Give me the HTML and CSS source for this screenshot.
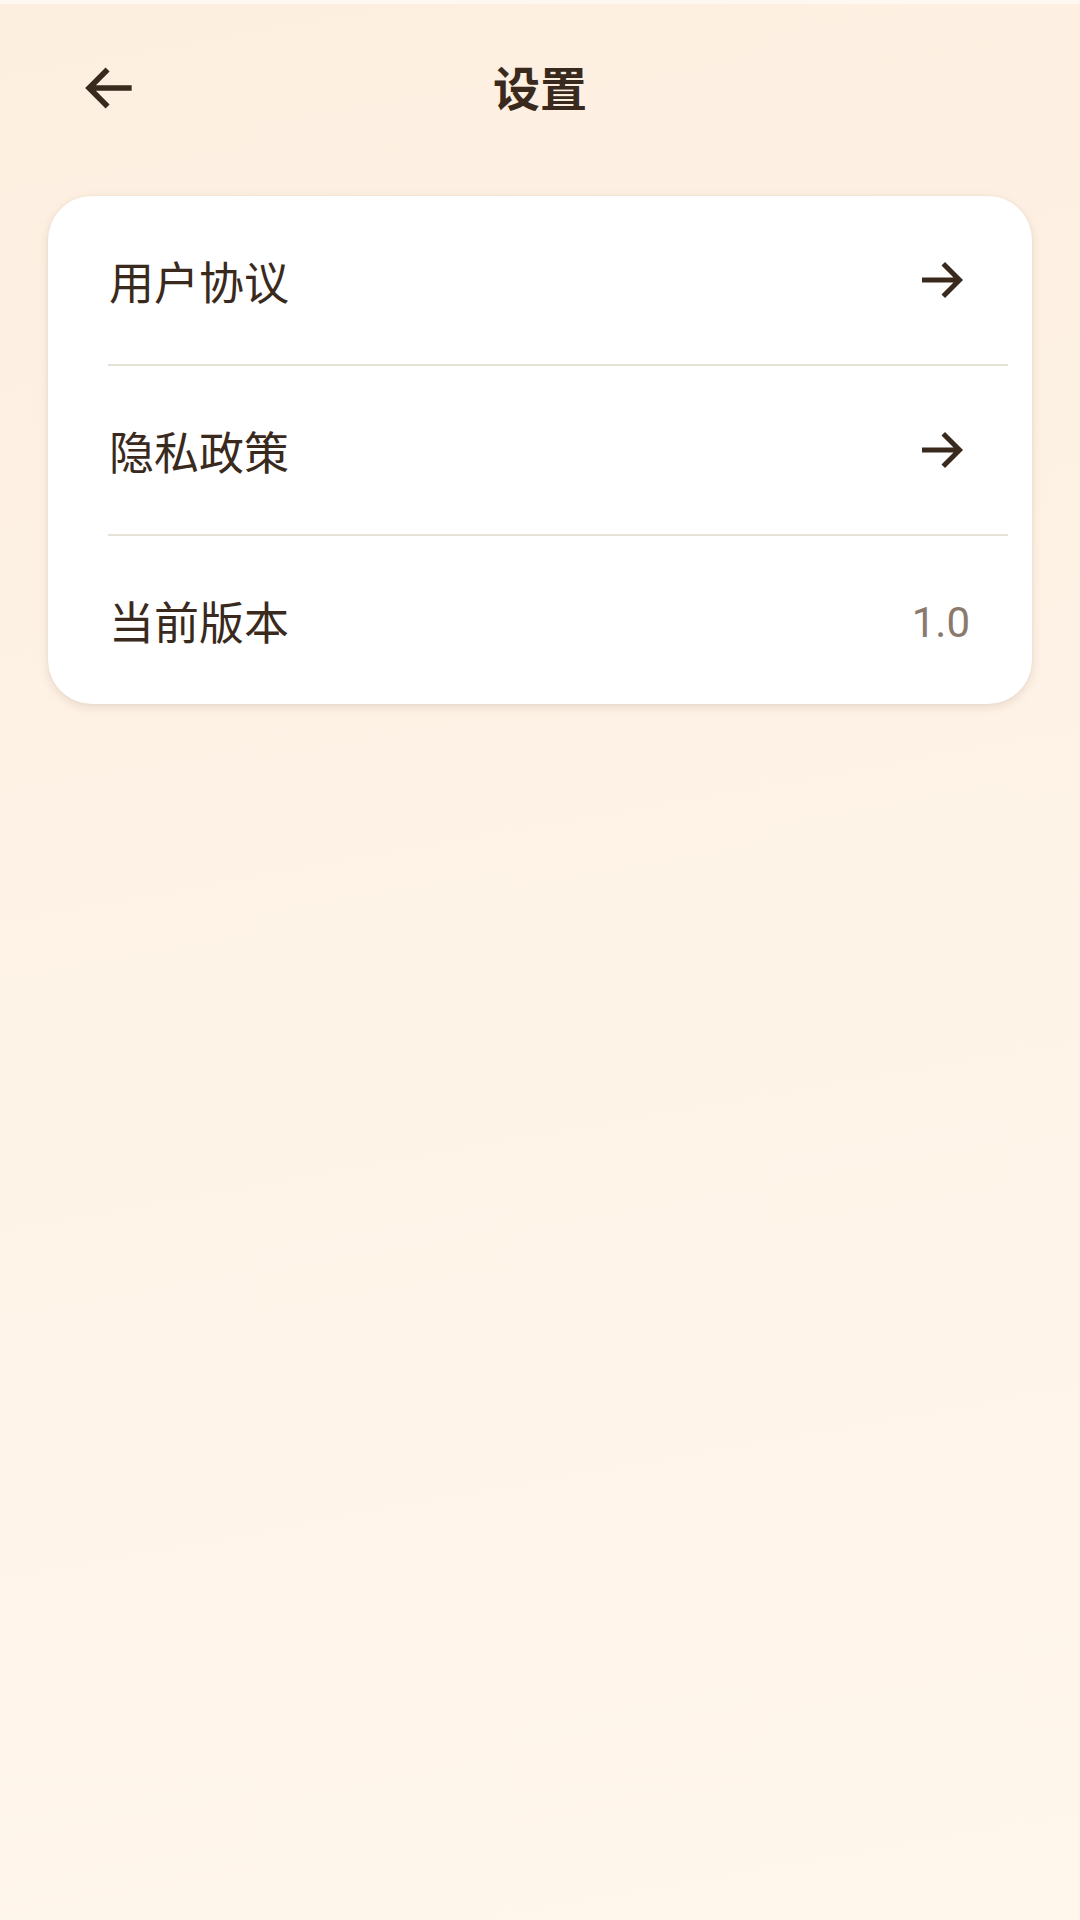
FILE: index.html
```html
<!DOCTYPE html>
<html lang="zh">
<head>
<meta charset="utf-8">
<title>设置</title>
<link rel="stylesheet" href="styles.css">
</head>
<body>
<div class="page">
  <div class="statusbar"></div>
  <header class="header">
    <div class="back">
      <svg class="back-icon" viewBox="0 0 24 24"><path d="M20 12H5M11.5 5.5L5 12l6.5 6.5" fill="none" stroke="#3a2a1e" stroke-width="2" stroke-linecap="butt" stroke-linejoin="miter"/></svg>
    </div>
    <h1 class="title">设置</h1>
    <div class="spacer"></div>
  </header>
  <section class="card">
    <div class="row">
      <span class="label">用户协议</span>
      <svg class="go" viewBox="0 0 24 24"><path d="M4 12h15M12.5 5.5L19 12l-6.5 6.5" fill="none" stroke="#3a2a1e" stroke-width="2"/></svg>
    </div>
    <div class="divider"></div>
    <div class="row">
      <span class="label">隐私政策</span>
      <svg class="go" viewBox="0 0 24 24"><path d="M4 12h15M12.5 5.5L19 12l-6.5 6.5" fill="none" stroke="#3a2a1e" stroke-width="2"/></svg>
    </div>
    <div class="divider"></div>
    <div class="row">
      <span class="label">当前版本</span>
      <span class="value">1.0</span>
    </div>
  </section>
</div>
</body>
</html>
```
FILE: styles.css
```css
html, body {
  margin: 0;
  padding: 0;
}
body {
  width: 1080px;
  height: 1920px;
  background: linear-gradient(170deg, #fdefe0 0%, #fef3e7 50%, #fff6ec 100%);
  font-family: "Noto Sans CJK SC", "Noto Sans", Roboto, sans-serif;
  color: #3a2a1e;
}
.page {
  display: flex;
  flex-direction: column;
}
.statusbar {
  height: 4px;
  background: #fff8f2;
}
.header {
  height: 172px;
  display: grid;
  grid-template-columns: 1fr auto 1fr;
  align-items: center;
}
.back {
  padding-left: 75px;
  display: flex;
  align-items: center;
  margin-top: -4px;
}
.back-icon {
  width: 68px;
  height: 68px;
  display: block;
}
.title {
  margin: 0;
  font-size: 47px;
  font-weight: 700;
  line-height: 1;
  margin-top: -10px;
}
.card {
  margin: 20px 48px 0;
  background: #ffffff;
  border-radius: 44px;
  box-shadow: 0 3px 10px rgba(120, 90, 60, 0.16), 0 0 2px rgba(120, 90, 60, 0.08);
  display: flex;
  flex-direction: column;
  overflow: hidden;
}
.row {
  height: 168px;
  display: flex;
  align-items: center;
  justify-content: space-between;
  padding: 0 60px 0 61px;
}
.label {
  font-size: 45px;
  line-height: 1;
  font-weight: 400;
}
.go {
  width: 60px;
  height: 60px;
  display: block;
}
.value {
  font-family: Roboto, "Noto Sans", sans-serif;
  font-size: 42px;
  color: #8a7a6e;
  line-height: 1;
  margin-right: 2px;
  margin-top: 6px;
}
.divider {
  height: 2px;
  background: #e6e2d8;
  margin: 0 24px 0 60px;
}
```
